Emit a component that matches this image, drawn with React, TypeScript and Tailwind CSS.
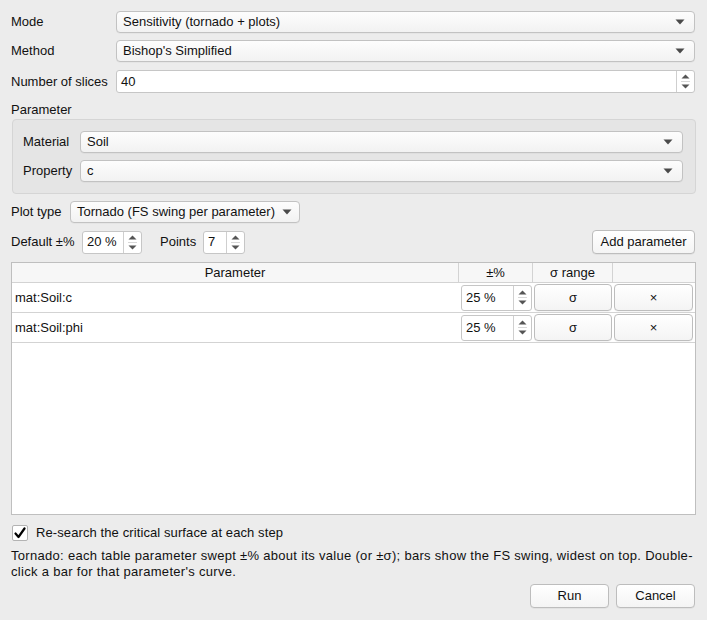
import React from "react";

const font = { fontFamily: '"Liberation Sans", Arial, sans-serif' };

function Caret() {
  return (
    <svg width="10" height="6" viewBox="0 0 10 6" className="shrink-0">
      <path d="M0.5 0.5 H9.5 L5 5.5 Z" fill="#4a4a4a" />
    </svg>
  );
}

function Combo({ value, className = "" }: { value: string; className?: string }) {
  return (
    <div
      className={`h-[22px] flex items-center justify-between gap-[6px] rounded-[4px] border border-[#c2c2c2] bg-gradient-to-b from-[#fdfdfd] to-[#f2f2f2] pl-[6px] shadow-[0_0.5px_0_rgba(0,0,0,0.06)] ${className}`}
    >
      <span className="text-[13px] text-[#111] whitespace-nowrap">{value}</span>
      <Caret />
    </div>
  );
}

function SpinArrows() {
  return (
    <div className="w-[18px] shrink-0 flex flex-col items-center justify-center gap-[2px] border-l border-[#cfcfcf]">
      <svg width="9" height="5" viewBox="0 0 9 5">
        <path d="M0.5 4.5 L4.5 0.5 L8.5 4.5 Z" fill="#555" />
      </svg>
      <div className="w-[9px] h-px bg-[#d8d8d8]" />
      <svg width="9" height="5" viewBox="0 0 9 5">
        <path d="M0.5 0.5 L8.5 0.5 L4.5 4.5 Z" fill="#555" />
      </svg>
    </div>
  );
}

function Spin({ value, className = "" }: { value: string; className?: string }) {
  return (
    <div
      className={`flex bg-white border border-[#c6c6c6] rounded-[3px] overflow-hidden ${className}`}
    >
      <div className="flex-1 flex items-center pl-[4px] text-[13px] text-[#111]">{value}</div>
      <SpinArrows />
    </div>
  );
}

function Button({ label, className = "" }: { label: string; className?: string }) {
  return (
    <div
      className={`flex items-center justify-center rounded-[4px] border border-[#bdbdbd] bg-gradient-to-b from-white to-[#f4f4f4] text-[13px] text-[#111] shadow-[0_0.5px_0_rgba(0,0,0,0.08)] ${className}`}
    >
      {label}
    </div>
  );
}

const params = [
  { name: "mat:Soil:c", pct: "25 %" },
  { name: "mat:Soil:phi", pct: "25 %" },
];

export default function App() {
  return (
    <div
      style={font}
      className="w-[707px] h-[620px] bg-[#ececec] pt-[11px] pl-[11px] pr-[11px] flex flex-col text-[13px] text-[#111] overflow-hidden"
    >
      {/* mode / method / slices */}
      <div className="flex items-center h-[22px] pr-px">
        <span className="w-[105px]">Mode</span>
        <Combo value="Sensitivity (tornado + plots)" className="flex-1 pr-[9px]" />
      </div>
      <div className="flex items-center h-[22px] mt-[7px] pr-px">
        <span className="w-[105px]">Method</span>
        <Combo value="Bishop's Simplified" className="flex-1 pr-[9px]" />
      </div>
      <div className="flex items-center h-[23px] mt-[8px] pr-px">
        <span className="w-[105px] whitespace-nowrap">Number of slices</span>
        <Spin value="40" className="flex-1 h-[23px]" />
      </div>

      {/* parameter group */}
      <div className="mt-[9px] h-[16px] leading-[16px]">Parameter</div>
      <div className="mt-px ml-px rounded-[4px] border border-[#d5d5d5] bg-[#e5e5e5] pl-[10px] pr-[12px] pt-[11px] pb-[11px] flex flex-col gap-[7px]">
        <div className="flex items-center">
          <span className="w-[57px]">Material</span>
          <Combo value="Soil" className="flex-1 pr-[9px]" />
        </div>
        <div className="flex items-center">
          <span className="w-[57px]">Property</span>
          <Combo value="c" className="flex-1 pr-[9px]" />
        </div>
      </div>

      {/* plot type */}
      <div className="flex items-center h-[22px] mt-[7px]">
        <span className="w-[59px]">Plot type</span>
        <Combo value="Tornado (FS swing per parameter)" className="w-[230px] pr-[7px]" />
      </div>

      {/* default / points / add */}
      <div className="flex items-center h-[24px] mt-[7px] pr-px">
        <span className="w-[71px] whitespace-nowrap">Default ±%</span>
        <Spin value="20 %" className="w-[60px] h-[23px]" />
        <span className="ml-[18px] w-[43px]">Points</span>
        <Spin value="7" className="w-[42px] h-[23px]" />
        <Button label="Add parameter" className="ml-auto w-[103px] h-[24px]" />
      </div>

      {/* table */}
      <div className="mt-[8px] h-[253px] bg-white border border-[#bfbfbf] flex flex-col">
        <div className="flex h-[20px] bg-[#f7f7f7] border-b border-[#d3d3d3] text-[13px]">
          <div className="w-[447px] flex items-center justify-center border-r border-[#d3d3d3]">Parameter</div>
          <div className="w-[74px] flex items-center justify-center border-r border-[#d3d3d3]">±%</div>
          <div className="w-[80px] flex items-center justify-center border-r border-[#d3d3d3]">σ range</div>
          <div className="flex-1" />
        </div>
        {params.map((p) => (
          <div key={p.name} className="flex h-[30px] border-b border-[#d3d3d3]">
            <div className="w-[447px] flex items-center pl-[3px]">{p.name}</div>
            <div className="w-[74px] flex items-center pl-[2px]">
              <Spin value={p.pct} className="w-[71px] h-[26px]" />
            </div>
            <div className="w-[80px] flex items-center pl-px">
              <Button label="σ" className="w-[78px] h-[27px] rounded-[2px]" />
            </div>
            <div className="flex-1 flex items-center pl-px pr-[2px]">
              <Button label="×" className="flex-1 h-[27px] rounded-[2px]" />
            </div>
          </div>
        ))}
      </div>

      {/* checkbox */}
      <div className="flex items-center h-[17px] mt-[9px]">
        <div className="ml-px w-[16px] h-[16px] bg-white border border-[#b3b3b3] rounded-[2px] flex items-center justify-center">
          <svg width="12" height="12" viewBox="0 0 12 12">
            <path d="M1.5 6.5 L4.5 10 L10.5 1.5" fill="none" stroke="#000" strokeWidth="2.2" strokeLinecap="round" strokeLinejoin="round" />
          </svg>
        </div>
        <span className="ml-[8px] tracking-[0.1px]">Re-search the critical surface at each step</span>
      </div>

      {/* note */}
      <div className="mt-[7px] leading-[16px] text-[13px] tracking-[0.3px] whitespace-nowrap">
        Tornado: each table parameter swept ±% about its value (or ±σ); bars show the FS swing, widest on top. Double-
        <br />
        click a bar for that parameter's curve.
      </div>

      {/* footer */}
      <div className="flex justify-end gap-[7px] mt-[4px] pr-px">
        <Button label="Run" className="w-[79px] h-[24px]" />
        <Button label="Cancel" className="w-[79px] h-[24px]" />
      </div>
    </div>
  );
}
